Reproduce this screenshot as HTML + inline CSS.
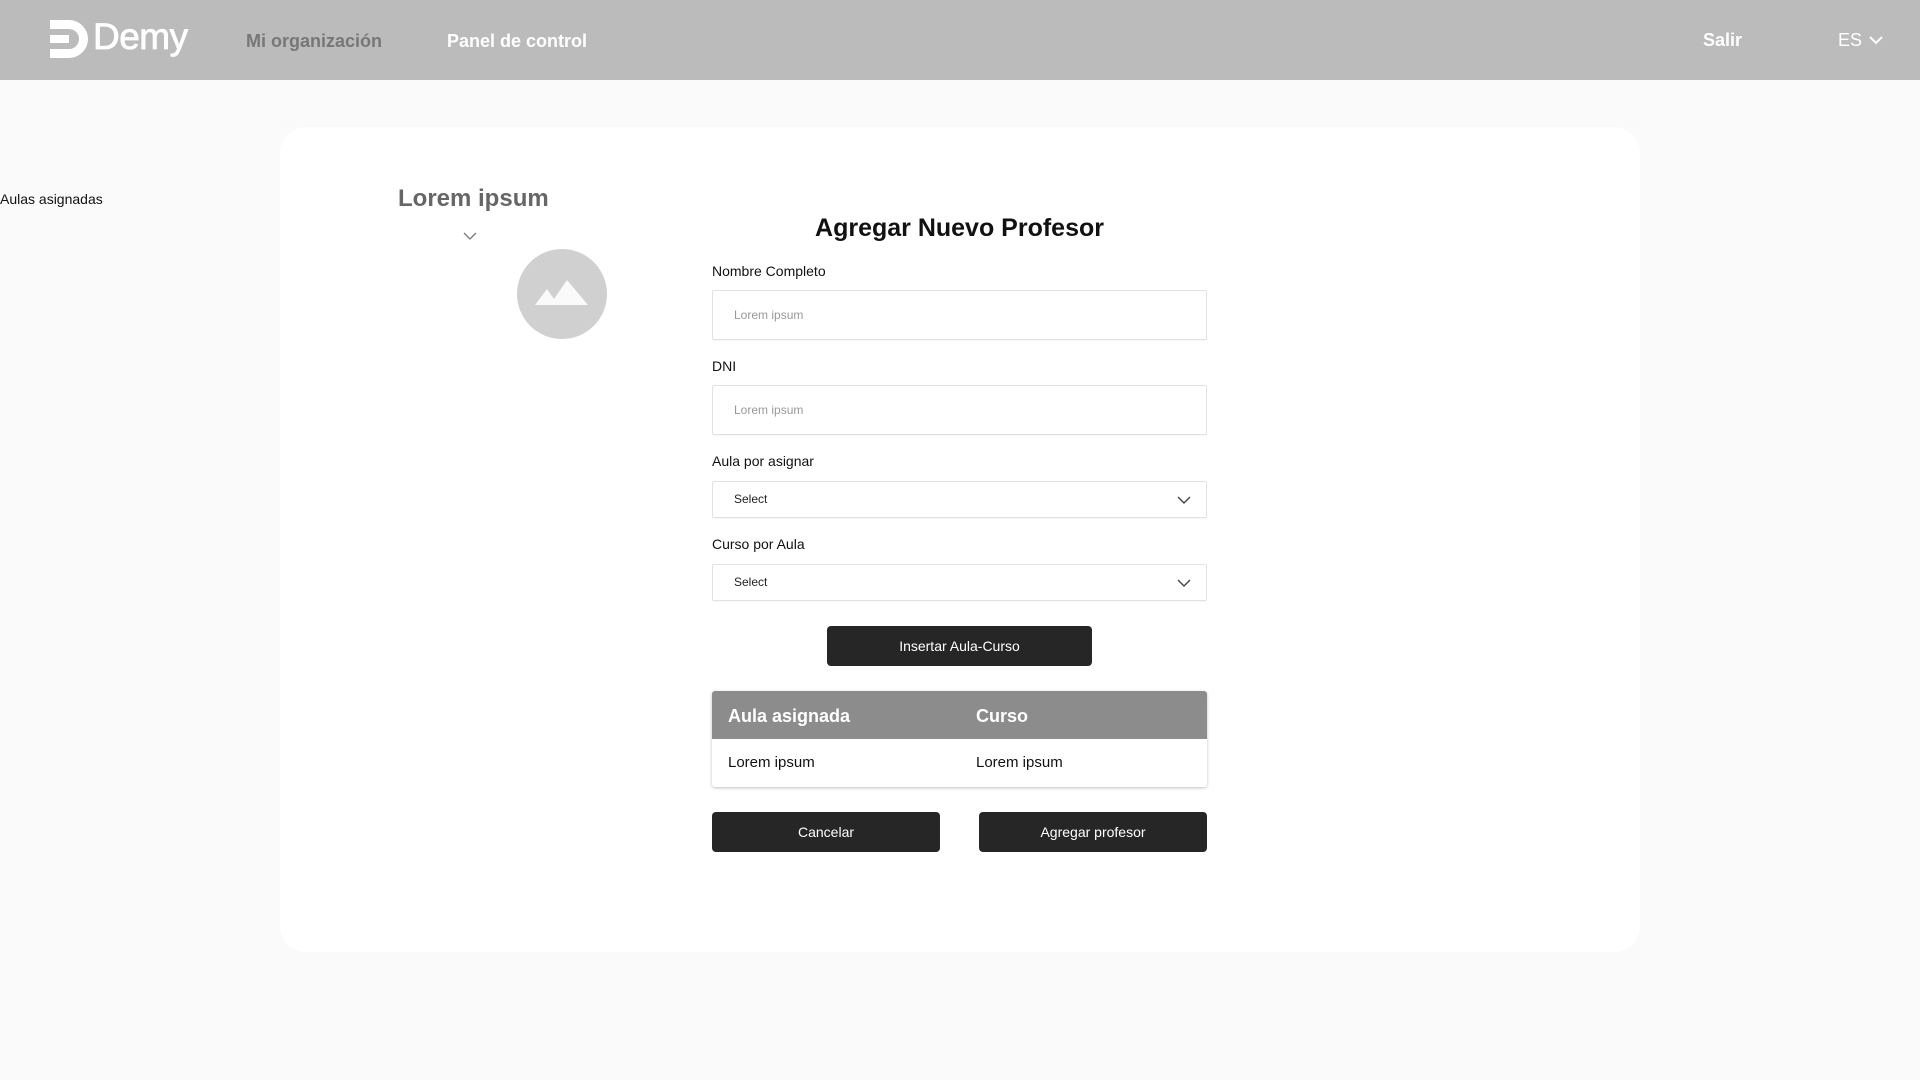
<!DOCTYPE html>
<html><head><meta charset="utf-8"><style>
*{margin:0;padding:0;box-sizing:border-box}
body{width:1920px;height:1080px;background:#fafafa;font-family:"Liberation Sans",sans-serif;position:relative;overflow:hidden;color:#111}
.a{position:absolute}
.hdr{left:0;top:0;width:1920px;height:80px;background:#bbbbbb}
.card{left:280px;top:127px;width:1360px;height:825px;background:#fff;border-radius:26px}
.lbl{font-size:14px;color:#111}
.inp{background:#fff;border:1px solid #e2e2e2;border-radius:2px;box-shadow:0 1px 1px rgba(0,0,0,.04)}
.ph{position:absolute;left:21px;font-size:12px;color:#999}
.btn{background:#262626;color:#fff;border-radius:4px;font-size:14px;display:flex;align-items:center;justify-content:center}
</style></head><body>
<div class="a hdr">
  <svg class="a" style="left:50px;top:20px" width="38" height="38" viewBox="0 0 38 38">
    <path d="M0 0H19A19 19 0 0 1 19 38H0V29H19A10 10 0 0 0 19 9H0Z" fill="#fff"/>
    <rect x="0" y="15" width="19" height="8" fill="#fff"/>
  </svg>
  <div class="a" style="left:93px;top:16px;font-size:37px;color:#fff;letter-spacing:-0.5px;-webkit-text-stroke:0.8px #fff">Demy</div>
  <div class="a" style="left:246px;top:31px;font-size:18px;font-weight:bold;color:#777">Mi organización</div>
  <div class="a" style="left:447px;top:31px;font-size:18px;font-weight:bold;color:#fff">Panel de control</div>
  <div class="a" style="left:1703px;top:30px;font-size:18px;font-weight:bold;color:#fff">Salir</div>
  <div class="a" style="left:1838px;top:30px;font-size:18px;color:#fff">ES</div>
  <svg class="a" style="left:1868px;top:34px" width="16" height="12" viewBox="0 0 16 12"><path d="M2 3L8 9L14 3" stroke="#fff" stroke-width="2" fill="none"/></svg>
</div>
<div class="a card"></div>
<div class="a lbl" style="left:0;top:191px">Aulas asignadas</div>
<div class="a" style="left:398px;top:185px;font-size:24px;font-weight:bold;color:#666">Lorem ipsum</div>
<svg class="a" style="left:462px;top:230px" width="16" height="12" viewBox="0 0 16 12"><path d="M2 3L8 9L14 3" stroke="#777" stroke-width="1.3" fill="none"/></svg>
<div class="a" style="left:517px;top:249px;width:90px;height:90px;border-radius:50%;background:#d0d0d0"></div>
<svg class="a" style="left:532px;top:277px" width="60" height="30" viewBox="0 0 60 30"><path d="M3 28L15 12L22 22L35 3L56 28Z" fill="#fafafa"/></svg>
<div class="a" style="left:712px;top:214px;width:495px;text-align:center;font-size:25px;font-weight:bold">Agregar Nuevo Profesor</div>
<div class="a lbl" style="left:712px;top:263px">Nombre Completo</div>
<div class="a inp" style="left:712px;top:290px;width:495px;height:50px"><span class="ph" style="top:17px">Lorem ipsum</span></div>
<div class="a lbl" style="left:712px;top:358px">DNI</div>
<div class="a inp" style="left:712px;top:385px;width:495px;height:50px"><span class="ph" style="top:17px">Lorem ipsum</span></div>
<div class="a lbl" style="left:712px;top:453px">Aula por asignar</div>
<div class="a inp" style="left:712px;top:481px;width:495px;height:37px"><span class="ph" style="top:10px;color:#222">Select</span>
<svg class="a" style="left:463px;top:12px" width="16" height="12" viewBox="0 0 16 12"><path d="M2 3L8 9L14 3" stroke="#444" stroke-width="1.4" fill="none"/></svg></div>
<div class="a lbl" style="left:712px;top:536px">Curso por Aula</div>
<div class="a inp" style="left:712px;top:564px;width:495px;height:37px"><span class="ph" style="top:10px;color:#222">Select</span>
<svg class="a" style="left:463px;top:12px" width="16" height="12" viewBox="0 0 16 12"><path d="M2 3L8 9L14 3" stroke="#444" stroke-width="1.4" fill="none"/></svg></div>
<div class="a btn" style="left:827px;top:626px;width:265px;height:40px">Insertar Aula-Curso</div>
<div class="a" style="left:712px;top:691px;width:495px;height:96px;border-radius:3px;background:#fff;box-shadow:0 1px 3px rgba(0,0,0,.25);overflow:hidden">
  <div style="height:48px;background:#8c8c8c;position:relative;color:#fff;font-weight:bold;font-size:18px">
    <span class="a" style="left:16px;top:15px">Aula asignada</span><span class="a" style="left:264px;top:15px">Curso</span></div>
  <div style="position:relative;font-size:15px">
    <span class="a" style="left:16px;top:15px">Lorem ipsum</span><span class="a" style="left:264px;top:15px">Lorem ipsum</span></div>
</div>
<div class="a btn" style="left:712px;top:812px;width:228px;height:40px">Cancelar</div>
<div class="a btn" style="left:979px;top:812px;width:228px;height:40px">Agregar profesor</div>
</body></html>
